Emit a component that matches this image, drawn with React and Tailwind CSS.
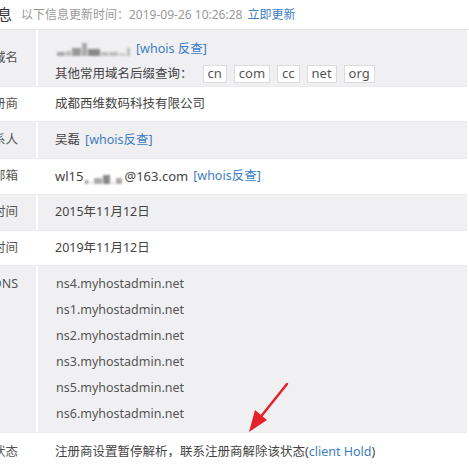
import React from "react";

const font = { fontFamily: '"Noto Sans", "Noto Sans CJK SC", sans-serif' };

function Label({ children, top }) {
  return (
    <div className={`w-[38px] shrink-0 flex justify-end ${top ? "items-start pt-[9px]" : "items-center"} pr-[18px] border-r-2 border-white whitespace-nowrap text-[#555] overflow-visible`}>
      <span>{children}</span>
    </div>
  );
}

function Blur({ w }) {
  return (
    <span className="inline-flex items-end gap-[1px] h-[14px] blur-[0.8px] align-middle">
      {w.map((b, i) => (
        <span key={i} className="inline-block" style={{ width: b[0], height: b[1], background: b[2] }} />
      ))}
    </span>
  );
}

function Row({ label, gray, h, children, top, labelTop }) {
  return (
    <div
      className={`flex ${gray ? "bg-[#f0f0f2]" : "bg-white"} border-b border-[#ebebeb]`}
      style={{ height: h }}
    >
      <Label top={labelTop}>{label}</Label>
      <div className={`flex-1 pl-[17px] flex ${top ? "flex-col" : "items-center"} text-[#444]`}>
        {children}
      </div>
    </div>
  );
}

const Link = ({ children }) => <span className="text-[#3d7dc4]">{children}</span>;

export default function App() {
  return (
    <div className="w-[469px] h-[469px] overflow-hidden bg-white relative text-[12.5px]" style={font}>
      <div className="h-[30px] flex items-center border-b border-[#e2e2e2]">
        <div className="w-[12px] flex justify-end whitespace-nowrap text-[15px] text-[#333]">
          <span>域名信息</span>
        </div>
        <span className="ml-[9px] text-[12px] text-[#999]">
          以下信息更新时间：2019-09-26 10:26:28
        </span>
        <span className="ml-[5px] text-[12px] text-[#3d7dc4]">立即更新</span>
      </div>
      <div className="mr-[2px]">
        <Row label="域名" gray h={57} top>
          <div className="h-[20px] mt-[9px] flex items-center pl-[2px]">
            <Blur w={[[8, 4, "#a8a8a8"], [5, 5, "#bbb"], [9, 8, "#999"], [5, 13, "#aaa"], [12, 7, "#888"], [7, 4, "#bbb"], [9, 4, "#bbb"], [7, 3, "#ccc"], [3, 8, "#bbb"]]} />
            <span className="ml-[6px]"><Link>[whois 反查]</Link></span>
          </div>
          <div className="h-[22px] mt-[4px] flex items-center">
            <span>其他常用域名后缀查询：</span>
            <div className="ml-[10px] flex gap-[7px]">
              {["cn", "com", "cc", "net", "org"].map((t) => (
                <span key={t} className="h-[18px] px-[4px] flex items-center bg-white border border-[#dcdcdc] text-[#555] text-[13px]">
                  {t}
                </span>
              ))}
            </div>
          </div>
        </Row>
        <Row label="注册商" h={35}>成都西维数码科技有限公司</Row>
        <Row label="联系人" gray h={37}>
          <span>吴磊</span>
          <span className="ml-[5px]"><Link>[whois反查]</Link></span>
        </Row>
        <Row label="联系邮箱" h={36}>
          <span className="text-[13px]">wl15</span>
          <span className="mx-[2px]">
            <Blur w={[[3, 4, "#999"], [4, 2, "#ddd"], [8, 6, "#aaa"], [7, 9, "#888"], [4, 2, "#ddd"], [6, 6, "#aaa"]]} />
          </span>
          <span className="text-[13px]">@163.com</span>
          <span className="ml-[5px]"><Link>[whois反查]</Link></span>
        </Row>
        <Row label="创建时间" gray h={36}>2015年11月12日</Row>
        <Row label="过期时间" h={35}>2019年11月12日</Row>
        <Row label="DNS" gray h={167} top labelTop>
          <div className="pt-[5px] pl-[1px] flex flex-col text-[12.5px] text-[#555]">
            {["ns4", "ns1", "ns2", "ns3", "ns5", "ns6"].map((n) => (
              <div key={n} className="h-[26px] flex items-center">{n}.myhostadmin.net</div>
            ))}
          </div>
        </Row>
        <Row label="域名状态" h={40}>
          <span>注册商设置暂停解析，联系注册商解除该状态(</span>
          <Link>client Hold</Link>
          <span>)</span>
        </Row>
      </div>
      <svg className="absolute left-0 top-0 pointer-events-none" width="469" height="469">
        <line x1="287" y1="384" x2="259" y2="419" stroke="#e3222a" strokeWidth="2.5" strokeLinecap="round" />
        <polygon points="249,432 255,410 267,420" fill="#e3222a" />
      </svg>
    </div>
  );
}
